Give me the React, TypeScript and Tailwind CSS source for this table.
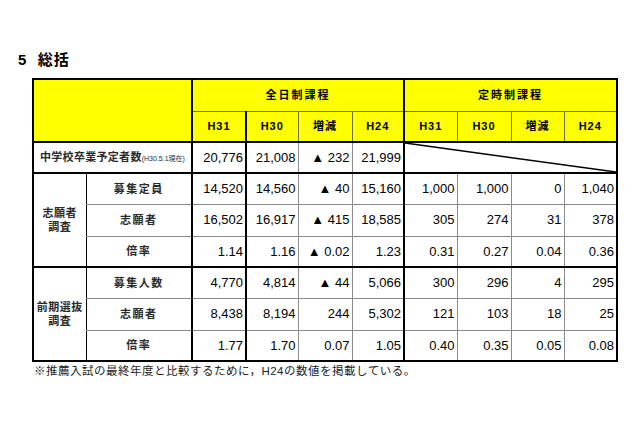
const font = { fontFamily: '"Liberation Sans", "Noto Sans CJK JP", sans-serif' };

type Row = { label: string; zen: string[]; tei: string[] };

const shigan: Row[] = [
  { label: "募集定員", zen: ["14,520", "14,560", "▲ 40", "15,160"], tei: ["1,000", "1,000", "0", "1,040"] },
  { label: "志願者", zen: ["16,502", "16,917", "▲ 415", "18,585"], tei: ["305", "274", "31", "378"] },
  { label: "倍率", zen: ["1.14", "1.16", "▲ 0.02", "1.23"], tei: ["0.31", "0.27", "0.04", "0.36"] },
];

const zenki: Row[] = [
  { label: "募集人数", zen: ["4,770", "4,814", "▲ 44", "5,066"], tei: ["300", "296", "4", "295"] },
  { label: "志願者", zen: ["8,438", "8,194", "244", "5,302"], tei: ["121", "103", "18", "25"] },
  { label: "倍率", zen: ["1.77", "1.70", "0.07", "1.05"], tei: ["0.40", "0.35", "0.05", "0.08"] },
];

const years = ["H31", "H30", "増減", "H24"];

function DataCells({ r, last }: { r: Row; last: boolean }) {
  const b = last ? "border-b-2 border-b-black" : "border-b border-b-[#8a8a8a]";
  return (
    <>
      <td className={`border-l-2 border-l-black text-right pr-[2px] text-[13px] ${b}`}>{r.zen[0]}</td>
      <td className={`border-l-2 border-l-black text-right pr-[2px] text-[13px] ${b}`}>{r.zen[1]}</td>
      <td className={`border-l border-l-[#8a8a8a] text-right pr-[2px] text-[13px] ${b}`}>{r.zen[2]}</td>
      <td className={`border-l border-l-[#8a8a8a] text-right pr-[2px] text-[13px] ${b}`}>{r.zen[3]}</td>
      <td className={`border-l-2 border-l-black text-right pr-[2px] text-[13px] ${b}`}>{r.tei[0]}</td>
      <td className={`border-l border-l-[#8a8a8a] text-right pr-[2px] text-[13px] ${b}`}>{r.tei[1]}</td>
      <td className={`border-l border-l-[#8a8a8a] text-right pr-[2px] text-[13px] ${b}`}>{r.tei[2]}</td>
      <td className={`border-l border-l-[#8a8a8a] border-r-2 border-r-black text-right pr-[2px] text-[13px] ${b}`}>{r.tei[3]}</td>
    </>
  );
}

function Group({ title, rows }: { title: [string, string]; rows: Row[] }) {
  return (
    <>
      {rows.map((r, i) => {
        const last = i === rows.length - 1;
        return (
          <tr key={r.label + i} className={i === 1 ? "h-[32px]" : "h-[31px]"}>
            {i === 0 && (
              <td
                rowSpan={3}
                className="border-l-2 border-l-black border-b-2 border-b-black text-center text-[11px] font-bold leading-[14px] tracking-[0.5px] text-[#2a2a2a]"
              >
                {title[0]}
                <br />
                {title[1]}
              </td>
            )}
            <td
              className={`border-l border-l-black text-center text-[11px] font-bold tracking-[1.5px] text-[#2a2a2a] ${
                last ? "border-b-2 border-b-black" : "border-b border-b-[#8a8a8a]"
              }`}
            >
              {r.label}
            </td>
            <DataCells r={r} last={last} />
          </tr>
        );
      })}
    </>
  );
}

export default function App() {
  return (
    <div className="w-[640px] h-[426px] bg-white text-black relative" style={font}>
      <div className="pt-[50px] pl-[18px] text-[15px] font-bold leading-[20px] tracking-[1px]">
        5&nbsp;&nbsp;総括
      </div>

      <table className="ml-[32px] mt-[8px] table-fixed border-collapse w-[584px]">
        <colgroup>
          <col className="w-[53px]" />
          <col className="w-[106px]" />
          <col className="w-[54px]" />
          <col className="w-[52px]" />
          <col className="w-[54px]" />
          <col className="w-[52px]" />
          <col className="w-[53px]" />
          <col className="w-[54px]" />
          <col className="w-[53px]" />
          <col className="w-[53px]" />
        </colgroup>
        <tbody>
          <tr className="h-[32px] bg-[#ffff00]">
            <td colSpan={2} rowSpan={2} className="border-2 border-black" />
            <td
              colSpan={4}
              className="border-t-2 border-t-black border-l-2 border-l-black border-b border-b-[#6f6f3a] text-center text-[11px] font-bold tracking-[2px]"
            >
              全日制課程
            </td>
            <td
              colSpan={4}
              className="border-t-2 border-t-black border-l-2 border-l-black border-r-2 border-r-black border-b border-b-[#6f6f3a] text-center text-[11px] font-bold tracking-[2px]"
            >
              定時制課程
            </td>
          </tr>
          <tr className="h-[31px] bg-[#ffff00]">
            {years.map((y, i) => (
              <td
                key={"z" + y}
                className={`border-b-2 border-b-black text-center text-[11px] font-bold tracking-[1px] ${
                  i < 2 ? "border-l-2 border-l-black" : "border-l border-l-[#6f6f3a]"
                }`}
              >
                {y}
              </td>
            ))}
            {years.map((y, i) => (
              <td
                key={"t" + y}
                className={`border-b-2 border-b-black text-center text-[11px] font-bold tracking-[1px] ${
                  i === 0 ? "border-l-2 border-l-black" : "border-l border-l-[#6f6f3a]"
                } ${i === 3 ? "border-r-2 border-r-black" : ""}`}
              >
                {y}
              </td>
            ))}
          </tr>

          <tr className="h-[31px]">
            <td
              colSpan={2}
              className="border-l-2 border-l-black border-b-2 border-b-black pl-[6px] text-[11px] font-bold tracking-[0.3px] text-[#2a2a2a] whitespace-nowrap"
            >
              中学校卒業予定者数
              <span className="text-[7px] font-normal tracking-normal">(H30.5.1現在)</span>
            </td>
            <td className="border-l-2 border-l-black border-b-2 border-b-black text-right pr-[2px] text-[13px]">20,776</td>
            <td className="border-l-2 border-l-black border-b-2 border-b-black text-right pr-[2px] text-[13px]">21,008</td>
            <td className="border-l border-l-[#8a8a8a] border-b-2 border-b-black text-right pr-[2px] text-[13px]">▲ 232</td>
            <td className="border-l border-l-[#8a8a8a] border-b-2 border-b-black text-right pr-[2px] text-[13px]">21,999</td>
            <td
              colSpan={4}
              className="relative border-l-2 border-l-black border-r-2 border-r-black border-b-2 border-b-black p-0"
            >
              <svg className="absolute inset-0 w-full h-full" viewBox="0 0 100 100" preserveAspectRatio="none">
                <line x1="0" y1="0" x2="100" y2="100" stroke="black" strokeWidth="1.5" vectorEffect="non-scaling-stroke" />
              </svg>
            </td>
          </tr>

          <Group title={["志願者", "調査"]} rows={shigan} />
          <Group title={["前期選抜", "調査"]} rows={zenki} />
        </tbody>
      </table>

      <div className="pl-[34px] pt-[1px] text-[11.5px] leading-[16px] tracking-[0.5px] text-[#222]">
        ※推薦入試の最終年度と比較するために，H24の数値を掲載している。
      </div>
    </div>
  );
}
